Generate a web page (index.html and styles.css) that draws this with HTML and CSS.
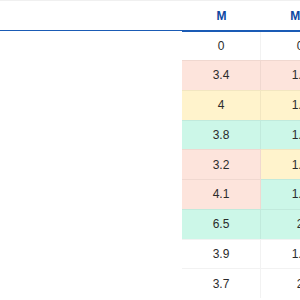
FILE: index.html
```
<!DOCTYPE html>
<html>
<head>
<meta charset="utf-8">
<link rel="stylesheet" href="styles.css">
</head>
<body>
<div class="topline"></div>
<div class="grid">
  <div class="row head">
    <div class="lead"></div>
    <div class="cell">M</div>
    <div class="cell">Min</div>
  </div>
  <div class="row first">
    <div class="lead"></div>
    <div class="cell">0</div>
    <div class="cell">0</div>
  </div>
  <div class="row">
    <div class="lead"></div>
    <div class="cell red">3.4</div>
    <div class="cell red">1.2</div>
  </div>
  <div class="row">
    <div class="lead"></div>
    <div class="cell yellow">4</div>
    <div class="cell yellow">1.5</div>
  </div>
  <div class="row">
    <div class="lead"></div>
    <div class="cell green">3.8</div>
    <div class="cell green">1.4</div>
  </div>
  <div class="row">
    <div class="lead"></div>
    <div class="cell red">3.2</div>
    <div class="cell yellow">1.1</div>
  </div>
  <div class="row">
    <div class="lead"></div>
    <div class="cell red">4.1</div>
    <div class="cell green">1.6</div>
  </div>
  <div class="row">
    <div class="lead"></div>
    <div class="cell green">6.5</div>
    <div class="cell green">2</div>
  </div>
  <div class="row">
    <div class="lead"></div>
    <div class="cell">3.9</div>
    <div class="cell">1.3</div>
  </div>
  <div class="row">
    <div class="lead"></div>
    <div class="cell">3.7</div>
    <div class="cell">2</div>
  </div>
</div>
</body>
</html>
```
FILE: styles.css
```
html, body {
  margin: 0;
  padding: 0;
  overflow: hidden;
  background: #ffffff;
}
body {
  font-family: "Liberation Sans", Arial, sans-serif;
  font-size: 12px;
  color: #2b2b2b;
}
.topline {
  height: 1px;
  background: #f0f0f0;
}
.grid {
  display: flex;
  flex-direction: column;
  width: 400px;
}
.row {
  display: flex;
  align-items: stretch;
}
.lead {
  flex: none;
  width: 182px;
}
.cell {
  flex: none;
  box-sizing: border-box;
  width: 79px;
  height: 29.75px;
  border-top: 1px solid rgba(0, 0, 0, 0.05);
  border-right: 1px solid rgba(0, 0, 0, 0.05);
  display: flex;
  align-items: center;
  justify-content: center;
}
.row.first .cell {
  height: 28px;
  border-top: none;
}
.row.head {
  align-items: flex-start;
}
.row.head .lead {
  height: 29px;
  border-bottom: 1px solid #1a5bb5;
}
.row.head .cell {
  height: 31px;
  border-top: none;
  border-right: none;
  border-bottom: 2px solid #1a5bb5;
  color: #0d47a1;
  font-weight: bold;
  box-sizing: border-box;
}
.red { background: #fde4dc; }
.yellow { background: #fff3cc; }
.green { background: #ccf7e8; }
```
